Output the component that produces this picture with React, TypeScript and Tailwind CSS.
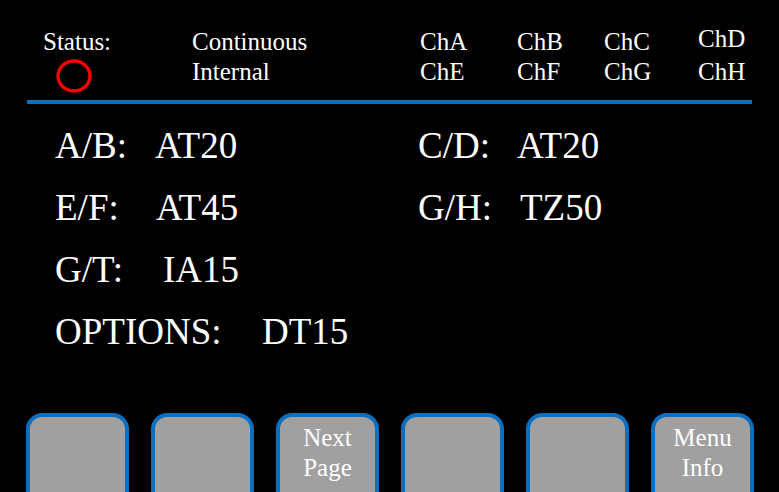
type Row = { label: string; value: string; labelW: string };

const LEFT: Row[] = [
  { label: "A/B:", value: "AT20", labelW: "w-[100px]" },
  { label: "E/F:", value: "AT45", labelW: "w-[101px]" },
  { label: "G/T:", value: "IA15", labelW: "w-[108px]" },
  { label: "OPTIONS:", value: "DT15", labelW: "w-[207px]" },
];

const RIGHT: Row[] = [
  { label: "C/D:", value: "AT20", labelW: "w-[99px]" },
  { label: "G/H:", value: "TZ50", labelW: "w-[102px]" },
];

function SoftKey({ lines }: { lines?: string[] }) {
  return (
    <div className="w-[103px] h-[84px] shrink-0 rounded-t-[16px] border-4 border-[#0a6fbf] bg-[#a0a0a0] pt-[6px] text-center text-white text-[25px] leading-[30px]">
      {lines?.map((l) => <div key={l}>{l}</div>)}
    </div>
  );
}

function DataRow({ r }: { r: Row }) {
  return (
    <div className="flex h-[62px] items-center">
      <span className={`${r.labelW} shrink-0`}>{r.label}</span>
      <span>{r.value}</span>
    </div>
  );
}

export default function App() {
  return (
    <div className="font-[Liberation_Serif,serif] w-[779px] h-[492px] bg-black text-white overflow-hidden antialiased">
      {/* header */}
      <div className="h-[100px] pt-[27px] flex text-[25px] leading-[30px]">
        <div className="ml-[43px] w-[149px] shrink-0">
          <div>Status:</div>
          <svg width="36" height="34" viewBox="0 0 36 34" className="ml-[13px] mt-[2px]">
            <ellipse cx="18" cy="17" rx="16" ry="15" fill="none" stroke="#ff0000" strokeWidth="3.4" />
          </svg>
        </div>
        <div className="w-[228px] shrink-0">
          <div>Continuous</div>
          <div>Internal</div>
        </div>
        <div className="w-[97px] shrink-0">
          <div>ChA</div>
          <div>ChE</div>
        </div>
        <div className="w-[87px] shrink-0">
          <div>ChB</div>
          <div>ChF</div>
        </div>
        <div className="w-[94px] shrink-0">
          <div>ChC</div>
          <div>ChG</div>
        </div>
        <div className="shrink-0">
          <div className="-mt-[3px] mb-[3px]">ChD</div>
          <div>ChH</div>
        </div>
      </div>

      <div className="ml-[27px] w-[725px] h-[4px] bg-[#0a6fbf]" />

      {/* channel assignments */}
      <div className="flex pt-[11px] text-[37px] leading-[62px]">
        <div className="ml-[55px] w-[363px] shrink-0">
          {LEFT.map((r) => <DataRow key={r.label} r={r} />)}
        </div>
        <div>
          {RIGHT.map((r) => <DataRow key={r.label} r={r} />)}
        </div>
      </div>

      {/* soft keys */}
      <div className="mt-[50px] ml-[26px] flex gap-[22px]">
        <SoftKey />
        <SoftKey />
        <SoftKey lines={["Next", "Page"]} />
        <SoftKey />
        <SoftKey />
        <SoftKey lines={["Menu", "Info"]} />
      </div>
    </div>
  );
}
